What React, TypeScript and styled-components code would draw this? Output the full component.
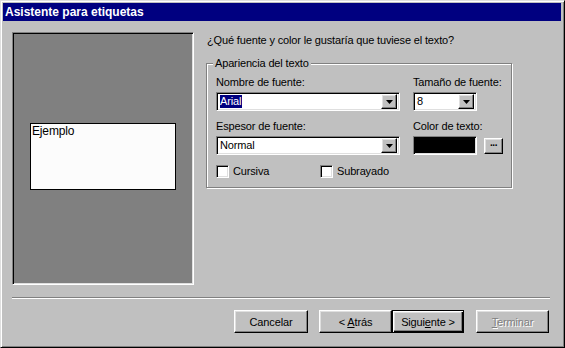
import styled, { createGlobalStyle, css } from 'styled-components';

const Global = createGlobalStyle`
    html, body {
        margin: 0;
        padding: 0;
        background: #c0c0c0;
    }
`;

const raised = css`
    border: 1px solid;
    border-color: #fff #000 #000 #fff;
    box-shadow: inset -1px -1px #808080, inset 1px 1px #dfdfdf;
`;

const sunken = css`
    border: 1px solid;
    border-color: #808080 #fff #fff #808080;
    box-shadow: inset 1px 1px #000, inset -1px -1px #dfdfdf;
`;

const Window = styled.div`
    width: 565px;
    height: 348px;
    box-sizing: border-box;
    background: #c0c0c0;
    border: 1px solid;
    border-color: #dfdfdf #000 #000 #dfdfdf;
    box-shadow: inset 1px 1px #fff, inset -1px -1px #808080;
    padding: 2px;
    display: flex;
    flex-direction: column;
    font-family: "Liberation Sans", Arial, sans-serif;
    font-size: 11px;
    letter-spacing: -0.15px;
    color: #000;
`;

const TitleBar = styled.div`
    height: 18px;
    margin-right: 1px;
    background: #000080;
    color: #fff;
    font-weight: bold;
    font-size: 12px;
    letter-spacing: 0;
    display: flex;
    align-items: center;
    padding-left: 2px;
`;

const Body = styled.div`
    display: flex;
    gap: 12px;
    padding: 11px 0 0 9px;
`;

const Preview = styled.div`
    width: 182px;
    height: 253px;
    box-sizing: border-box;
    background: #808080;
    ${sunken}
    display: flex;
    align-items: center;
    justify-content: center;
    padding-bottom: 4px;
`;

const Label = styled.div`
    width: 146px;
    height: 67px;
    box-sizing: border-box;
    background: #fcfcfc;
    border: 1px solid #000;
    font-size: 12px;
    line-height: 14px;
    padding-left: 1px;
`;

const Side = styled.div`
    width: 306px;
    display: flex;
    flex-direction: column;
`;

const Question = styled.p`
    margin: 2px 0 0 1px;
    line-height: 13px;
`;

const GroupBox = styled.div`
    position: relative;
    margin-top: 16px;
    border: 1px solid #808080;
    box-shadow: inset 1px 1px #fff, 1px 1px #fff;
    padding: 12px 9px 9px 9px;
`;

const Caption = styled.span`
    position: absolute;
    top: -7px;
    left: 6px;
    padding: 0 2px;
    background: #c0c0c0;
    line-height: 13px;
`;

const Fields = styled.div`
    display: grid;
    grid-template-columns: 184px 1fr;
    column-gap: 13px;
    row-gap: 9px;
`;

const Field = styled.div`
    display: flex;
    flex-direction: column;
    gap: 3px;
    line-height: 13px;
    white-space: nowrap;
`;

const Combo = styled.div<{ $w: number }>`
    width: ${({ $w }) => $w}px;
    height: 19px;
    box-sizing: border-box;
    background: #fff;
    ${sunken}
    display: flex;
    align-items: center;
    padding: 2px 2px 2px 3px;
`;

const Value = styled.span<{ $selected?: boolean }>`
    line-height: 13px;
    padding: 0 1px 0 0;
    ${({ $selected }) => $selected && css`
        background: #000080;
        color: #fff;
    `}
`;

const ArrowBtn = styled.div`
    margin-left: auto;
    width: 16px;
    height: 15px;
    box-sizing: border-box;
    background: #c0c0c0;
    ${raised}
    display: flex;
    align-items: center;
    justify-content: center;
`;

const ColorRow = styled.div`
    display: flex;
    align-items: center;
    gap: 7px;
`;

const Swatch = styled.div`
    width: 64px;
    height: 19px;
    box-sizing: border-box;
    background: #000;
    ${sunken}
`;

const DotsBtn = styled.div`
    width: 19px;
    height: 16px;
    box-sizing: border-box;
    background: #c0c0c0;
    ${raised}
    font-weight: bold;
    font-size: 10px;
    line-height: 8px;
    text-align: center;
    letter-spacing: -0.5px;
`;

const Checks = styled.div`
    display: flex;
    margin-top: 10px;
`;

const CheckItem = styled.label<{ $w?: number }>`
    display: flex;
    align-items: center;
    gap: 4px;
    width: ${({ $w }) => ($w ? `${$w}px` : 'auto')};
    line-height: 13px;
`;

const Box = styled.span`
    width: 13px;
    height: 13px;
    box-sizing: border-box;
    background: #fff;
    ${sunken}
`;

const Separator = styled.div`
    margin: 12px 0 0 9px;
    width: 538px;
    border-top: 1px solid #808080;
    border-bottom: 1px solid #fff;
`;

const Buttons = styled.div`
    display: flex;
    justify-content: flex-end;
    padding-right: 13px;
    margin-top: 11px;
`;

const Button = styled.button<{ $gap?: number; $w?: number; $default?: boolean }>`
    width: ${({ $w }) => $w ?? 73}px;
    height: 23px;
    margin-left: ${({ $gap }) => $gap ?? 0}px;
    box-sizing: border-box;
    padding: 0;
    background: #c0c0c0;
    font-family: "Liberation Sans", Arial, sans-serif;
    font-size: 11px;
    letter-spacing: -0.15px;
    color: #000;
    ${raised}
    ${({ $default }) => $default && css`
        border: 1px solid #000;
        box-shadow: inset 1px 1px #fff, inset -1px -1px #000, inset -2px -2px #808080, inset 2px 2px #dfdfdf;
    `}
    &:disabled {
        color: #808080;
        text-shadow: 1px 1px #fff;
    }
    u {
        text-underline-offset: 1px;
    }
`;

const Arrow = () => (
    <svg width="7" height="4" viewBox="0 0 7 4">
        <polygon points="0,0 7,0 3.5,4" fill="#000" />
    </svg>
);

export default function App() {
    return (
        <>
            <Global />
            <Window>
                <TitleBar>Asistente para etiquetas</TitleBar>
                <Body>
                    <Preview>
                        <Label>Ejemplo</Label>
                    </Preview>
                    <Side>
                        <Question>¿Qué fuente y color le gustaría que tuviese el texto?</Question>
                        <GroupBox>
                            <Caption>Apariencia del texto</Caption>
                            <Fields>
                                <Field>
                                    Nombre de fuente:
                                    <Combo $w={184}>
                                        <Value $selected>Arial</Value>
                                        <ArrowBtn><Arrow /></ArrowBtn>
                                    </Combo>
                                </Field>
                                <Field>
                                    Tamaño de fuente:
                                    <Combo $w={64}>
                                        <Value>8</Value>
                                        <ArrowBtn><Arrow /></ArrowBtn>
                                    </Combo>
                                </Field>
                                <Field>
                                    Espesor de fuente:
                                    <Combo $w={184}>
                                        <Value>Normal</Value>
                                        <ArrowBtn><Arrow /></ArrowBtn>
                                    </Combo>
                                </Field>
                                <Field>
                                    Color de texto:
                                    <ColorRow>
                                        <Swatch />
                                        <DotsBtn>...</DotsBtn>
                                    </ColorRow>
                                </Field>
                            </Fields>
                            <Checks>
                                <CheckItem $w={104}><Box />Cursiva</CheckItem>
                                <CheckItem><Box />Subrayado</CheckItem>
                            </Checks>
                        </GroupBox>
                    </Side>
                </Body>
                <Separator />
                <Buttons>
                    <Button $w={74}>Cancelar</Button>
                    <Button $gap={11}>&lt; <u>A</u>trás</Button>
                    <Button $default $w={72}>Sigui<u>e</u>nte &gt;</Button>
                    <Button $gap={12} disabled><u>T</u>erminar</Button>
                </Buttons>
            </Window>
        </>
    );
}
